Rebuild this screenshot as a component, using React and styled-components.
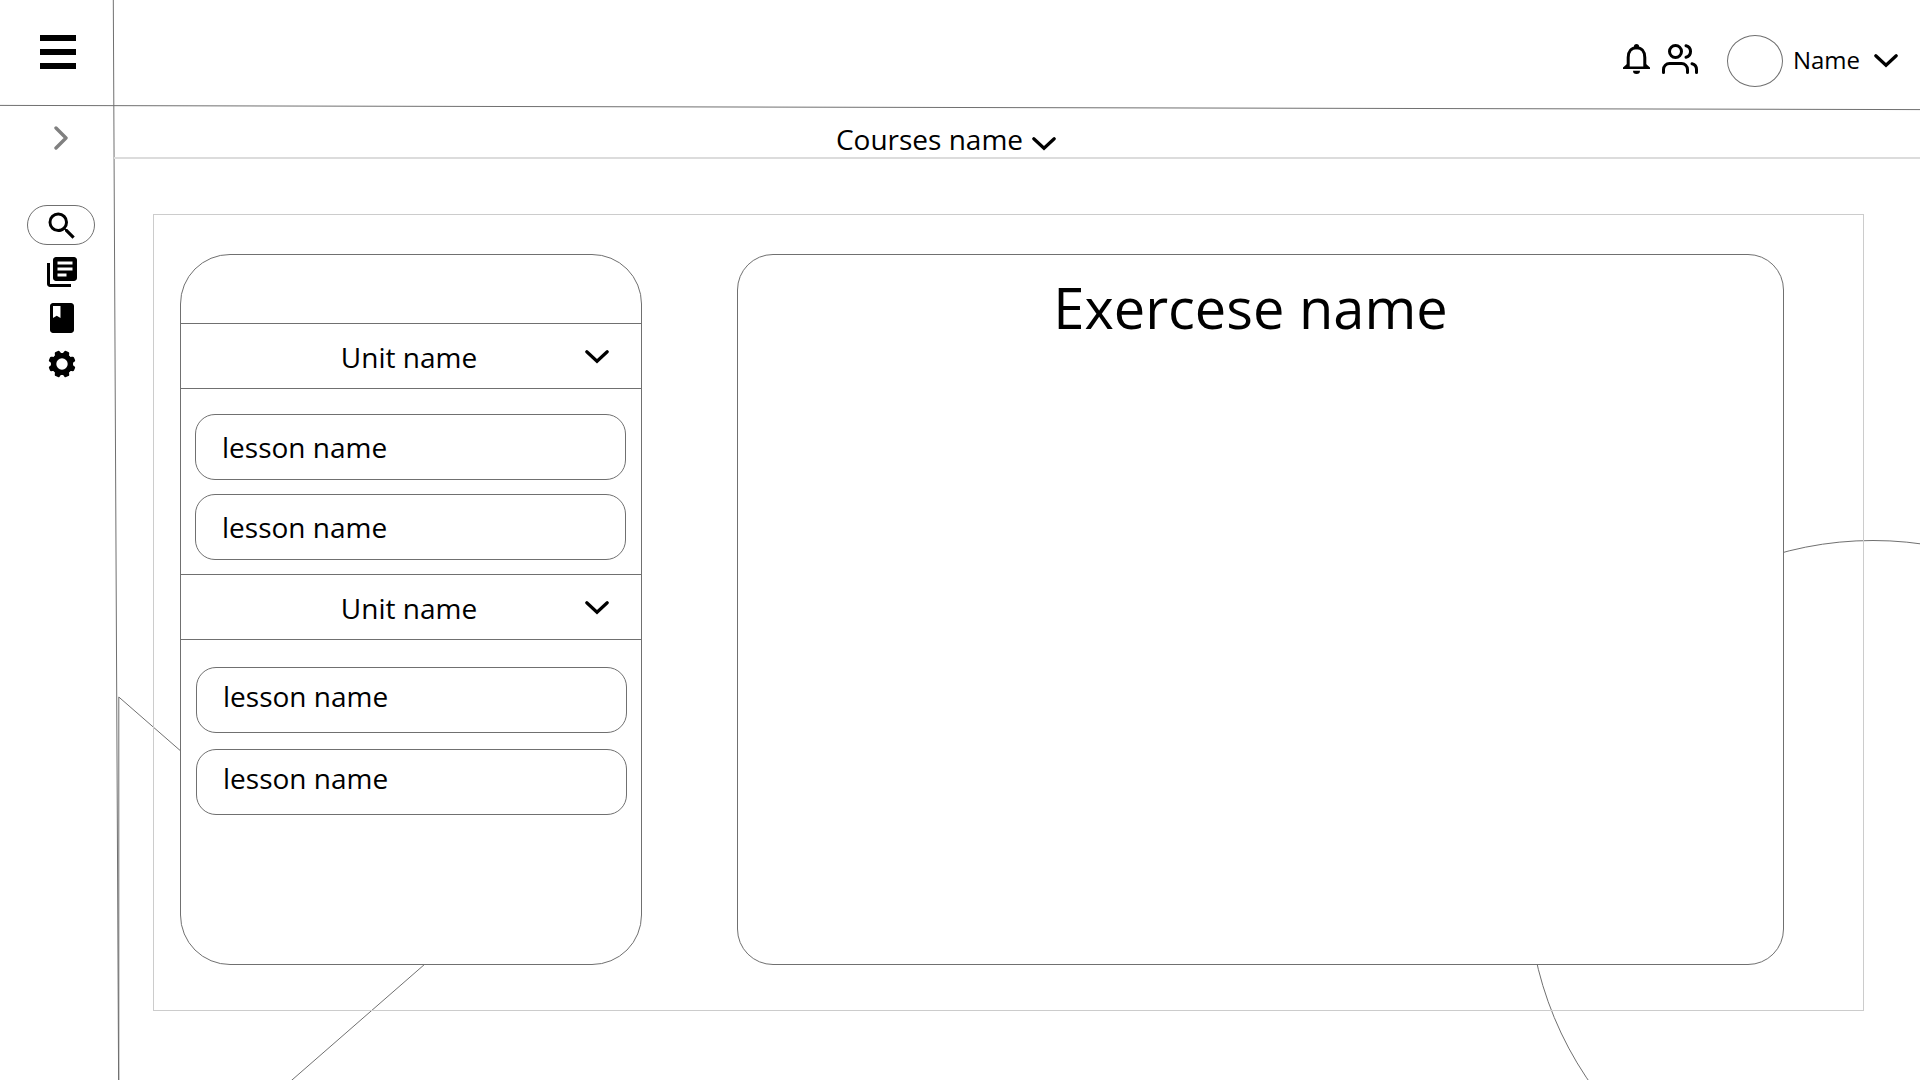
import React from "react";
import styled, { createGlobalStyle } from "styled-components";
import { MdSearch, MdLibraryBooks, MdBook } from "react-icons/md";
import { FiUsers } from "react-icons/fi";

const line = "#707070";

const GlobalStyle = createGlobalStyle`
  *, *::before, *::after { box-sizing: border-box; }
  body {
    margin: 0;
    background: #fff;
    color: #000;
    font-family: "Open Sans", "Noto Sans", sans-serif;
  }
  button {
    padding: 0;
    border: 0;
    background: none;
    color: inherit;
    font: inherit;
    cursor: pointer;
  }
  svg { display: block; flex: none; }
`;

const Page = styled.div`
  position: relative;
  display: grid;
  grid-template-columns: 114px minmax(0, 1fr);
  grid-template-rows: 107px minmax(0, 1fr);
  min-height: 100vh;
  overflow: hidden;
`;

const Backdrop = styled.svg`
  position: absolute;
  inset: 0;
  width: 100%;
  height: 100%;
  fill: none;
  stroke: ${line};
  pointer-events: none;
`;

const MenuCell = styled.div`
  display: flex;
  align-items: center;
  padding: 0 0 4px 40px;
`;

const MenuButton = styled.button`
  display: grid;
  gap: 8px;
  width: 36px;
`;

const MenuBar = styled.span`
  height: 6px;
  background: #000;
`;

const Header = styled.header`
  display: flex;
  align-items: center;
  justify-content: flex-end;
  padding: 14px 22px 0 0;
`;

const HeaderIcons = styled.div`
  display: flex;
  align-items: center;
  gap: 12px;
  margin-right: 29px;
  padding-bottom: 4px;
`;

const Profile = styled.button`
  display: flex;
  align-items: center;
  font-size: 24px;
  line-height: 36px;
`;

const Avatar = styled.span`
  width: 56px;
  height: 52px;
  margin-right: 10px;
  border: 1px solid ${line};
  border-radius: 50%;
`;

const ProfileName = styled.span`
  margin-right: 14px;
  padding-bottom: 2px;
`;

const Sidebar = styled.aside`
  display: flex;
  flex-direction: column;
  align-items: center;
  padding: 18px 0 0 8px;
`;

const ExpandButton = styled.button`
  margin-bottom: 54px;
`;

const SideNav = styled.nav`
  display: grid;
  gap: 6px;
  justify-items: center;
`;

const NavButton = styled.button`
  display: flex;
  align-items: center;
  justify-content: center;
  width: 68px;
  height: 40px;
  padding: 2px 0 0 1px;
  border: 1px solid ${(p) => (p.$active ? line : "transparent")};
  border-radius: 20px;
`;

const Main = styled.main`
  position: relative;
  display: flex;
  flex-direction: column;
`;

const CourseBar = styled.div`
  display: flex;
  justify-content: center;
  height: 52px;
  padding: 12px 142px 0 0;
  border-bottom: 2px solid #dcdcdc;
`;

const CourseButton = styled.button`
  display: flex;
  align-items: center;
  gap: 9px;
  height: 40px;
  font-size: 28px;
  line-height: 40px;

  svg { margin-top: 10px; }
`;

const Frame = styled.div`
  display: flex;
  flex: 1;
  gap: 95px;
  margin: 55px 56px 69px 39px;
  padding: 39px 79px 45px 26px;
  border: 1px solid #ccc;
`;

const UnitPanel = styled.section`
  flex: none;
  width: 462px;
  padding-top: 68px;
  border: 1px solid ${line};
  border-radius: 50px;
  background: #fff;
`;

const UnitButton = styled.button`
  display: grid;
  grid-template-columns: 24px 1fr 24px;
  align-items: center;
  width: 100%;
  height: 66px;
  padding: 1px 32px 0 28px;
  border-top: 1px solid ${line};
  border-bottom: 1px solid ${line};
  font-size: 28px;
  line-height: 40px;
`;

const UnitName = styled.span`
  grid-column: 2;
`;

const Lessons = styled.ul`
  display: grid;
  gap: ${(p) => (p.$loose ? 16 : 14)}px;
  margin: 0;
  padding: ${(p) => (p.$loose ? "27px 14px 0 15px" : "25px 15px 14px 14px")};
  list-style: none;
`;

const LessonButton = styled.button`
  display: flex;
  width: 100%;
  height: 66px;
  padding: ${(p) => (p.$loose ? 8 : 12)}px 26px 0;
  border: 1px solid ${line};
  border-radius: 20px;
  font-size: 28px;
  line-height: 40px;
`;

const ExercisePanel = styled.section`
  flex: 1;
  padding: 12px 20px 0 0;
  border: 1px solid ${line};
  border-radius: 36px;
  background: #fff;
`;

const ExerciseTitle = styled.h1`
  margin: 0;
  font-size: 56px;
  font-weight: 400;
  line-height: 80px;
  text-align: center;
`;

const ChevronDown = () => (
  <svg width="24" height="14" viewBox="0 0 24 14" fill="none" stroke="#000" strokeWidth="3.2" strokeLinecap="round" aria-hidden="true">
    <path d="M1.8 1.8L12 11.2L22.2 1.8" />
  </svg>
);

const BellIcon = () => (
  <svg width="27" height="30" viewBox="0 0 27 30" aria-hidden="true">
    <path d="M5.2 23V13.5C5.2 7.4 8.6 3.8 13.5 3.8S21.8 7.4 21.8 13.5V23" fill="none" stroke="#000" strokeWidth="3" />
    <circle cx="13.5" cy="2.6" r="2.6" />
    <path d="M0 25V23.4L4 20V22.6H23V20L27 23.4V25Z" />
    <path d="M10 26.8H17A3.5 3.2 0 0 1 10 26.8Z" />
  </svg>
);

const GearIcon = () => (
  <svg width="28" height="28" viewBox="-14 -14 28 28" aria-hidden="true">
    <circle r="8.4" fill="none" stroke="#000" strokeWidth="5.4" />
    {[0, 1, 2, 3, 4, 5, 6, 7].map((n) => (
      <path
        key={n}
        d="M-4 -9.5C-3 -10.4 -3 -11.6 -2.6 -12.6Q-2.3 -13.6 -1.2 -13.6H1.2Q2.3 -13.6 2.6 -12.6C3 -11.6 3 -10.4 4 -9.5L2 -8H-2Z"
        transform={`rotate(${22.5 + n * 45})`}
      />
    ))}
  </svg>
);

const units = [
  { id: 1, name: "Unit name", loose: false, lessons: ["lesson name", "lesson name"] },
  { id: 2, name: "Unit name", loose: true, lessons: ["lesson name", "lesson name"] },
];

export default function App() {
  return (
    <>
      <GlobalStyle />
      <Page>
        <Backdrop viewBox="0 0 1920 1080" preserveAspectRatio="none" aria-hidden="true">
          <path d="M113.3 0L118.6 1080" />
          <path d="M0 105.4L1920 109.6" />
          <path d="M118.8 697L425 964L118.8 1231Z" />
          <circle cx="1873" cy="885.5" r="345" />
        </Backdrop>

        <MenuCell>
          <MenuButton aria-label="Menu">
            <MenuBar />
            <MenuBar />
            <MenuBar />
          </MenuButton>
        </MenuCell>

        <Header>
          <HeaderIcons>
            <button aria-label="Notifications"><BellIcon /></button>
            <button aria-label="People"><FiUsers size={36} /></button>
          </HeaderIcons>
          <Profile>
            <Avatar />
            <ProfileName>Name</ProfileName>
            <ChevronDown />
          </Profile>
        </Header>

        <Sidebar>
          <ExpandButton aria-label="Expand sidebar">
            <svg width="14" height="26" viewBox="0 0 14 26" fill="none" stroke="#808080" strokeWidth="3.4" strokeLinecap="round" strokeLinejoin="round">
              <path d="M2 3L12 13L2 23" />
            </svg>
          </ExpandButton>
          <SideNav>
            <NavButton $active aria-label="Search"><MdSearch size={36} /></NavButton>
            <NavButton aria-label="Library"><MdLibraryBooks size={36} /></NavButton>
            <NavButton aria-label="Book"><MdBook size={36} /></NavButton>
            <NavButton aria-label="Settings"><GearIcon /></NavButton>
          </SideNav>
        </Sidebar>

        <Main>
          <CourseBar>
            <CourseButton>
              Courses name
              <ChevronDown />
            </CourseButton>
          </CourseBar>
          <Frame>
            <UnitPanel>
              {units.map((unit) => (
                <div key={unit.id}>
                  <UnitButton>
                    <UnitName>{unit.name}</UnitName>
                    <ChevronDown />
                  </UnitButton>
                  <Lessons $loose={unit.loose}>
                    {unit.lessons.map((name, i) => (
                      <li key={i}>
                        <LessonButton $loose={unit.loose}>{name}</LessonButton>
                      </li>
                    ))}
                  </Lessons>
                </div>
              ))}
            </UnitPanel>
            <ExercisePanel>
              <ExerciseTitle>Exercese name</ExerciseTitle>
            </ExercisePanel>
          </Frame>
        </Main>
      </Page>
    </>
  );
}
